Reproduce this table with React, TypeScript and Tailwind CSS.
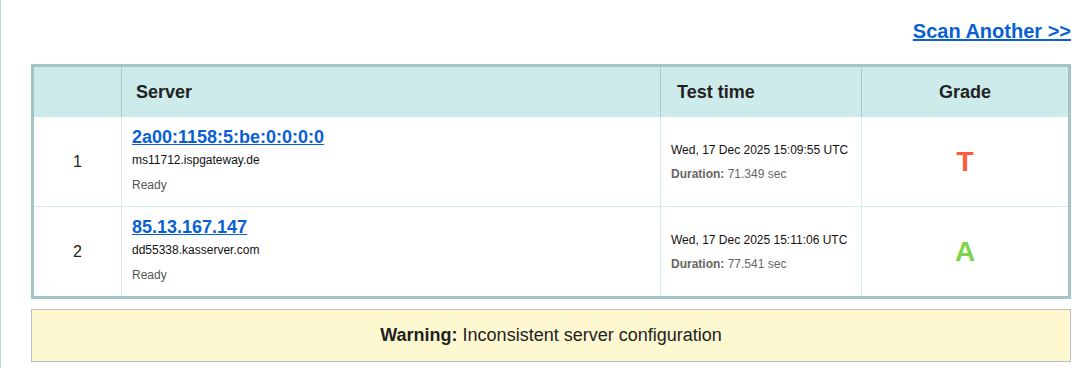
export default function App() {
  const rows = [
    {
      n: "1",
      ip: "2a00:1158:5:be:0:0:0:0",
      host: "ms11712.ispgateway.de",
      date: "Wed, 17 Dec 2025 15:09:55 UTC",
      dur: "71.349 sec",
      grade: "T",
      color: "text-[#ff5a3e]",
    },
    {
      n: "2",
      ip: "85.13.167.147",
      host: "dd55338.kasserver.com",
      date: "Wed, 17 Dec 2025 15:11:06 UTC",
      dur: "77.541 sec",
      grade: "A",
      color: "text-[#7ed34c]",
    },
  ];
  return (
    <div
      className="min-h-[368px] w-[1082px] border-l border-[#b9d8e0] bg-white pl-[30px] pr-[11px] pt-[20px] text-[#222]"
      style={{ fontFamily: '"Liberation Sans", Arial, sans-serif' }}
    >
      <div className="h-[23px] text-right text-[20px] leading-[23px]">
        <a href="#" className="font-bold text-[#0a5fd3] underline">
          Scan Another &gt;&gt;
        </a>
      </div>

      <div className="mt-[21px] border-[3px] border-[#a5c4c6]">
        <div className="grid h-[50px] grid-cols-[88px_539px_201px_206px] bg-[#cdebeb] text-[18px] font-bold text-[#222]">
          <div className="border-r border-[#a9c8cb]"></div>
          <div className="flex items-center border-r border-[#a9c8cb] pl-[14px]">Server</div>
          <div className="flex items-center border-r border-[#a9c8cb] pl-[16px]">Test time</div>
          <div className="flex items-center justify-center">Grade</div>
        </div>
        {rows.map((r, i) => (
          <div
            key={r.n}
            className={`grid h-[89px] grid-cols-[88px_539px_201px_206px] bg-white ${
              i === 0 ? "box-content border-b border-[#d2ebee]" : ""
            }`}
          >
            <div className="flex items-center justify-center border-r border-[#d2ebee] text-[16px] text-[#222]">
              {r.n}
            </div>
            <div className="flex flex-col border-r border-[#d2ebee] pl-[10px] pt-[10px]">
              <a href="#" className="self-start text-[18px] font-bold leading-[21px] text-[#0a5fd3] underline">
                {r.ip}
              </a>
              <div className="mt-[5px] text-[12px] leading-[14px] text-[#111]">{r.host}</div>
              <div className="mt-[11px] text-[12px] leading-[14px] text-[#555]">Ready</div>
            </div>
            <div className="flex flex-col justify-center border-r border-[#d2ebee] pl-[10px] text-[12px] leading-[14px]">
              <div className="text-[#111]">{r.date}</div>
              <div className="mt-[10px] text-[#666]">
                <span className="font-bold">Duration:</span> {r.dur}
              </div>
            </div>
            <div className={`flex items-center justify-center text-[28px] font-bold ${r.color}`}>
              {r.grade}
            </div>
          </div>
        ))}
      </div>

      <div className="mt-[10px] flex h-[53px] items-center justify-center border border-[#bdbdbd] bg-[#fef8d0] text-[18px] text-[#222]">
        <span>
          <span className="font-bold">Warning:</span> Inconsistent server configuration
        </span>
      </div>
    </div>
  );
}
